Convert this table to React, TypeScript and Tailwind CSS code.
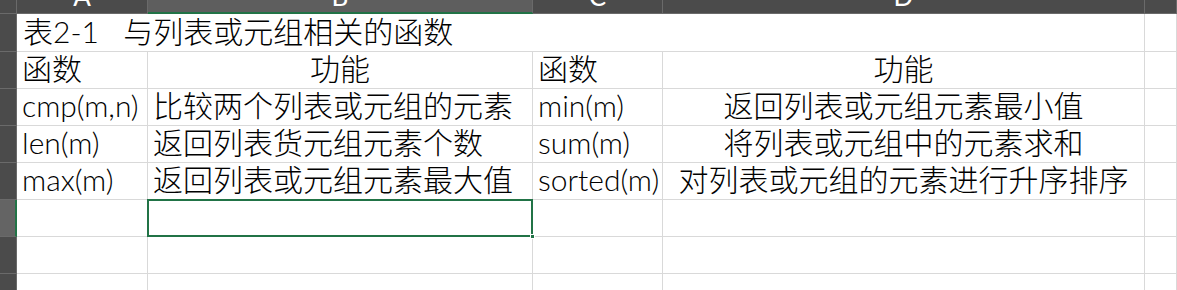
import React from "react";

const FONT = { fontFamily: 'Lato, "Noto Sans CJK SC", sans-serif' };

const rowHeaderBase = "bg-[#4b4b4b] border-r border-b border-[#6a6a6a]";
const cellBase = "border-r border-b border-[#d9d9d9] bg-white flex items-center pb-[4px] text-[30px] leading-[30px] font-light text-black whitespace-pre overflow-hidden";

function ColHeader({ letter, selected }: { letter: string; selected?: boolean }) {
  return (
    <div
      className={
        "flex items-end justify-center overflow-hidden border-r border-[#6a6a6a] " +
        (selected ? "bg-[#5e5e5e] border-b-2 border-b-[#217346]" : "bg-[#4b4b4b] border-b border-b-[#6a6a6a]")
      }
    >
      <span className={"text-[26px] leading-[26px] text-white " + (selected ? "pb-[3px]" : "pb-[4px]")}>{letter}</span>
    </div>
  );
}

function Cell({ children, center }: { children?: React.ReactNode; center?: boolean }) {
  return <div className={cellBase + (center ? " justify-center" : " pl-[5px]")}>{children}</div>;
}

const rows: [string, string, string, string][] = [
  ["函数", "功能", "函数", "功能"],
  ["cmp(m,n)", "比较两个列表或元组的元素", "min(m)", "返回列表或元组元素最小值"],
  ["len(m)", "返回列表货元组元素个数", "sum(m)", "将列表或元组中的元素求和"],
  ["max(m)", "返回列表或元组元素最大值", "sorted(m)", "对列表或元组的元素进行升序排序"],
];

export default function App() {
  return (
    <div className="w-[1177px] h-[290px] overflow-hidden bg-white" style={FONT}>
      <div className="grid grid-cols-[17px_131px_385px_130px_482px_1fr] grid-rows-[14px_38px_37px_37px_37px_37px_37px_37px_37px]">
        {/* header row */}
        <div className={rowHeaderBase} />
        <ColHeader letter="A" />
        <ColHeader letter="B" selected />
        <ColHeader letter="C" />
        <ColHeader letter="D" />
        <ColHeader letter="" />

        {/* row 1: merged title */}
        <div className={rowHeaderBase} />
        <div className={cellBase + " col-span-4 pl-[6px]"}>{"表2-1   与列表或元组相关的函数"}</div>
        <Cell />

        {rows.map((r, i) => (
          <React.Fragment key={i}>
            <div className={rowHeaderBase} />
            <Cell>{r[0]}</Cell>
            <Cell center={i === 0}>{r[1]}</Cell>
            <Cell>{r[2]}</Cell>
            <Cell center>{r[3]}</Cell>
            <Cell />
          </React.Fragment>
        ))}

        {/* row 6 with selected cell B6 */}
        <div className="bg-[#646464] border-b border-[#6a6a6a] border-r-2 border-r-[#217346]" />
        <Cell />
        <div className="relative border-r border-b border-[#d9d9d9] bg-white">
          <div className="absolute -left-px -top-px -right-px -bottom-px border-2 border-[#217346]" />
          <div className="absolute -right-[3px] -bottom-[3px] w-[5px] h-[5px] bg-[#217346] border border-white" />
        </div>
        <Cell />
        <Cell />
        <Cell />

        {[0, 1].map((k) => (
          <React.Fragment key={"e" + k}>
            <div className={rowHeaderBase} />
            <Cell />
            <Cell />
            <Cell />
            <Cell />
            <Cell />
          </React.Fragment>
        ))}
      </div>
    </div>
  );
}
